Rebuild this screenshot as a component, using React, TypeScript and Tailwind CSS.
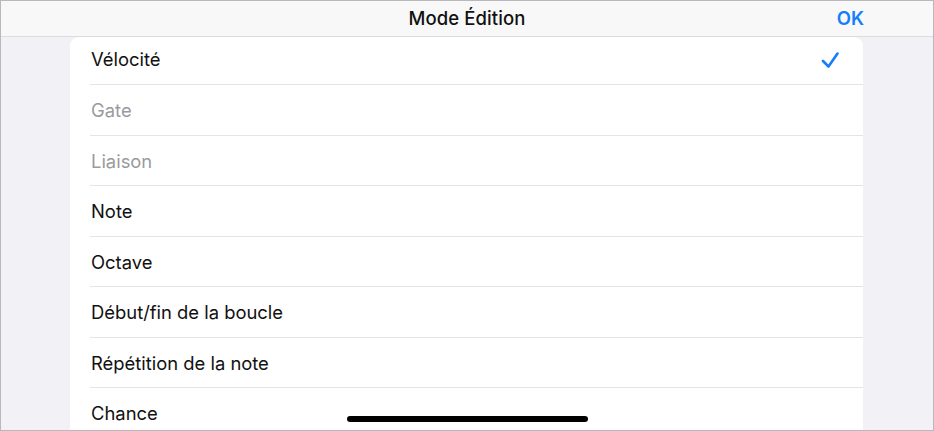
import React from "react";

const items: { label: string; dim?: boolean; checked?: boolean }[] = [
  { label: "Vélocité", checked: true },
  { label: "Gate", dim: true },
  { label: "Liaison", dim: true },
  { label: "Note" },
  { label: "Octave" },
  { label: "Début/fin de la boucle" },
  { label: "Répétition de la note" },
  { label: "Chance" },
];

export default function App() {
  return (
    <div
      className="relative w-[934px] h-[431px] overflow-hidden border border-[#b9b9bd] bg-[#f1f1f6] flex flex-col"
      style={{ fontFamily: "Inter, 'Liberation Sans', sans-serif" }}
    >
      <div className="h-[36px] shrink-0 bg-[#f8f8f9] border-b border-[#dcdcde] flex items-center relative">
        <div className="absolute inset-0 flex items-center justify-center text-[18.5px] font-medium text-[#111] tracking-[0.1px]">
          Mode Édition
        </div>
        <div className="ml-auto mr-[69px] text-[18.5px] font-semibold text-[#157efb] relative">OK</div>
      </div>
      <div className="flex-1 flex min-h-0">
        <div className="w-[69px] shrink-0" />
        <div className="w-[793px] bg-white rounded-t-[9px] overflow-hidden flex flex-col">
          <div className="h-[47px] shrink-0 flex items-center pl-[21px] pr-[24px] pb-[1px] text-[18.4px] text-[#111]">
            <span>{items[0].label}</span>
            <svg className="ml-auto" width="18" height="17" viewBox="0 0 18 17" fill="none">
              <path d="M2 9 L7.5 14.5 L16.5 1.5" stroke="#157efb" strokeWidth="2.6" strokeLinecap="round" strokeLinejoin="round" />
            </svg>
          </div>
          {items.slice(1).map((it) => (
            <div key={it.label} className="shrink-0 pl-[20px]">
              <div className="h-[50.5px] border-t border-[#e4e4e6] flex items-center pt-[3px] pl-[1px]">
                <span className={`text-[18.4px] ${it.dim ? "text-[#9a9a9e]" : "text-[#111]"}`}>{it.label}</span>
              </div>
            </div>
          ))}
        </div>
      </div>
      <div className="absolute left-[346px] top-[415px] w-[241px] h-[6px] rounded-full bg-black" />
    </div>
  );
}
